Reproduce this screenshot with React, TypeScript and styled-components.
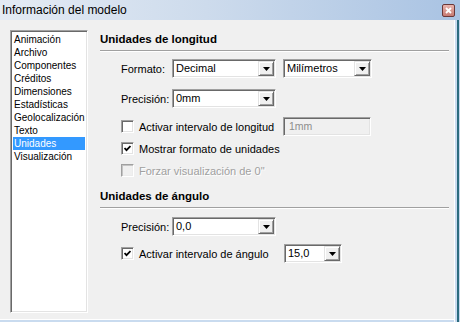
import React from "react";
import styled, { createGlobalStyle } from "styled-components";

const GlobalStyle = createGlobalStyle`
  html, body {
    margin: 0;
    padding: 0;
    background: #f0f0f0;
  }
  body {
    font-family: "Liberation Sans", Arial, sans-serif;
    font-size: 11px;
    color: #000;
  }
`;

const Frame = styled.div`
  width: 460px;
  height: 322px;
  box-sizing: border-box;
  background: #f0f0f0;
  display: flex;
  flex-direction: column;
  overflow: hidden;
  box-shadow: inset -1px 0 #c4d6eb, inset -3px 0 #2c6c7f, inset -5px 0 #c9dbef,
    inset -6px 0 #ffffff, inset 0 -2px #c9dbef, inset 0 -3px #ffffff;
`;

const TitleBar = styled.div`
  height: 20px;
  flex: none;
  display: flex;
  align-items: center;
  justify-content: space-between;
  padding: 0 5px 0 2px;
  font-size: 12px;
  background: linear-gradient(to right, #e4ebf4 0%, #cddbec 45%, #a9c3e3 100%);
`;

const CloseButton = styled.div`
  width: 13px;
  height: 13px;
  box-sizing: border-box;
  border: 1px solid #6b3838;
  border-radius: 2px;
  background: linear-gradient(#e9b4ae, #c77a72);
  display: flex;
  align-items: center;
  justify-content: center;
`;

const Body = styled.div`
  flex: 1;
  display: flex;
  padding: 10px 0 0 10px;
`;

const List = styled.div`
  width: 78px;
  height: 283px;
  flex: none;
  box-sizing: border-box;
  background: #fff;
  border: 1px solid;
  border-color: #a0a0a0 #ffffff #ffffff #a0a0a0;
  box-shadow: inset 1px 1px #696969, inset -1px -1px #e3e3e3;
  padding: 2px;
  font-size: 10px;
`;

const Item = styled.div<{ $selected?: boolean }>`
  height: 13px;
  line-height: 13px;
  padding-left: 1px;
  white-space: nowrap;
  overflow: hidden;
  background: ${({ $selected }) => ($selected ? "#3399ff" : "transparent")};
  color: ${({ $selected }) => ($selected ? "#fff" : "#000")};
`;

const Panel = styled.div`
  flex: 1;
  margin: 0 11px 0 12px;
  padding-top: 2px;
  display: flex;
  flex-direction: column;
`;

const Heading = styled.div<{ $mt?: number }>`
  margin-top: ${({ $mt }) => $mt ?? 0}px;
  font-weight: bold;
  font-size: 11.5px;
  line-height: 14px;
  padding-bottom: 4px;
  border-bottom: 1px solid #a0a0a0;
  box-shadow: 0 1px #ffffff;
`;

const Row = styled.div<{ $mt: number }>`
  display: flex;
  align-items: center;
  height: 19px;
  margin: ${({ $mt }) => $mt}px 0 0 21px;
`;

const Label = styled.span`
  width: 51px;
  flex: none;
  white-space: nowrap;
`;

const Select = styled.div<{ $w: number; $ml?: number }>`
  width: ${({ $w }) => $w}px;
  height: 19px;
  margin-left: ${({ $ml }) => $ml ?? 0}px;
  flex: none;
  box-sizing: border-box;
  display: flex;
  background: #fff;
  border: 1px solid;
  border-color: #a0a0a0 #ffffff #ffffff #a0a0a0;
  box-shadow: inset 1px 1px #696969, inset -1px -1px #e3e3e3;
  padding: 1px;
`;

const Value = styled.span`
  flex: 1;
  padding-left: 2px;
  line-height: 15px;
  white-space: nowrap;
  overflow: hidden;
`;

const DropButton = styled.span`
  width: 16px;
  height: 15px;
  flex: none;
  box-sizing: border-box;
  background: #f0f0f0;
  border: 1px solid;
  border-color: #e3e3e3 #696969 #696969 #e3e3e3;
  box-shadow: inset 1px 1px #ffffff, inset -1px -1px #a0a0a0;
  display: flex;
  align-items: center;
  justify-content: center;
`;

const TextField = styled.div<{ $w: number }>`
  width: ${({ $w }) => $w}px;
  height: 19px;
  flex: none;
  box-sizing: border-box;
  background: #f0f0f0;
  border: 1px solid;
  border-color: #a0a0a0 #ffffff #ffffff #a0a0a0;
  box-shadow: inset 1px 1px #696969, inset -1px -1px #e3e3e3;
  padding: 1px 0 0 5px;
  line-height: 15px;
  font-size: 10.5px;
  color: #8d8d8d;
`;

const CheckWrap = styled.label<{ $w?: number }>`
  display: flex;
  align-items: center;
  gap: 5px;
  width: ${({ $w }) => ($w ? `${$w}px` : "auto")};
  flex: none;
  white-space: nowrap;
`;

const Box = styled.span<{ $disabled?: boolean }>`
  width: 13px;
  height: 13px;
  flex: none;
  box-sizing: border-box;
  border: 1px solid;
  border-color: #a0a0a0 #ffffff #ffffff #a0a0a0;
  box-shadow: ${({ $disabled }) =>
    $disabled
      ? "inset 1px 1px #c4c4c4, inset -1px -1px #ececec"
      : "inset 1px 1px #696969, inset -1px -1px #e3e3e3"};
  background: ${({ $disabled }) => ($disabled ? "#f0f0f0" : "#fff")};
  display: flex;
  align-items: center;
  justify-content: center;
`;

const CheckText = styled.span<{ $disabled?: boolean }>`
  color: ${({ $disabled }) => ($disabled ? "#a0a0a0" : "#000")};
  text-shadow: ${({ $disabled }) => ($disabled ? "1px 1px #ffffff" : "none")};
`;

const Arrow = () => (
  <svg width="7" height="4" viewBox="0 0 7 4">
    <polygon points="0,0 7,0 3.5,4" fill="#000" />
  </svg>
);

const Tick = () => (
  <svg width="7" height="7" viewBox="0 0 7 7">
    <polyline points="0.5,3 2.5,5.2 6.5,1" fill="none" stroke="#000" strokeWidth="1.8" />
  </svg>
);

const Dropdown = ({ value, w, ml }: { value: string; w: number; ml?: number }) => (
  <Select $w={w} $ml={ml}>
    <Value>{value}</Value>
    <DropButton>
      <Arrow />
    </DropButton>
  </Select>
);

const Check = ({
  text,
  checked,
  disabled,
  w,
}: {
  text: string;
  checked?: boolean;
  disabled?: boolean;
  w?: number;
}) => (
  <CheckWrap $w={w}>
    <Box $disabled={disabled}>{checked && <Tick />}</Box>
    <CheckText $disabled={disabled}>{text}</CheckText>
  </CheckWrap>
);

const sections = [
  "Animación",
  "Archivo",
  "Componentes",
  "Créditos",
  "Dimensiones",
  "Estadísticas",
  "Geolocalización",
  "Texto",
  "Unidades",
  "Visualización",
];

export default function App() {
  return (
    <>
      <GlobalStyle />
      <Frame>
        <TitleBar>
          <span>Información del modelo</span>
          <CloseButton>
            <svg width="7" height="7" viewBox="0 0 7 7">
              <path d="M1 1 L6 6 M6 1 L1 6" stroke="#fff" strokeWidth="1.8" />
            </svg>
          </CloseButton>
        </TitleBar>
        <Body>
          <List>
            {sections.map((s) => (
              <Item key={s} $selected={s === "Unidades"}>
                {s}
              </Item>
            ))}
          </List>
          <Panel>
            <Heading>Unidades de longitud</Heading>
            <Row $mt={8}>
              <Label>Formato:</Label>
              <Dropdown value="Decimal" w={104} />
              <Dropdown value="Milímetros" w={89} ml={7} />
            </Row>
            <Row $mt={11}>
              <Label>Precisión:</Label>
              <Dropdown value="0mm" w={104} />
            </Row>
            <Row $mt={9}>
              <Check text="Activar intervalo de longitud" w={162} />
              <TextField $w={88}>1mm</TextField>
            </Row>
            <Row $mt={3}>
              <Check text="Mostrar formato de unidades" checked />
            </Row>
            <Row $mt={3}>
              <Check text={"Forzar visualización de 0\""} disabled />
            </Row>
            <Heading $mt={9}>Unidades de ángulo</Heading>
            <Row $mt={9}>
              <Label>Precisión:</Label>
              <Dropdown value="0,0" w={104} />
            </Row>
            <Row $mt={8}>
              <Check text="Activar intervalo de ángulo" checked w={163} />
              <Dropdown value="15,0" w={58} />
            </Row>
          </Panel>
        </Body>
      </Frame>
    </>
  );
}
